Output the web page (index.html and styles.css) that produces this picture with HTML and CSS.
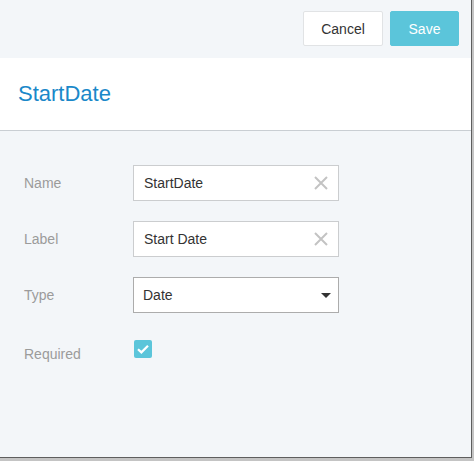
FILE: index.html
```html
<!DOCTYPE html>
<html>
<head>
<meta charset="utf-8">
<link rel="stylesheet" href="styles.css">
</head>
<body>
<div class="panel">
  <div class="toolbar">
    <button class="btn btn-cancel">Cancel</button>
    <button class="btn btn-save">Save</button>
  </div>
  <div class="header">StartDate</div>
  <div class="form">
    <div class="label">Name</div>
    <div class="field">
      <span class="value">StartDate</span>
      <svg class="clear" width="14" height="14" viewBox="0 0 14 14"><path d="M1 1 L13 13 M13 1 L1 13" stroke="#c3c3c3" stroke-width="2" fill="none"/></svg>
    </div>
    <div class="label">Label</div>
    <div class="field">
      <span class="value">Start Date</span>
      <svg class="clear" width="14" height="14" viewBox="0 0 14 14"><path d="M1 1 L13 13 M13 1 L1 13" stroke="#c3c3c3" stroke-width="2" fill="none"/></svg>
    </div>
    <div class="label">Type</div>
    <div class="field select">
      <span class="value">Date</span>
      <svg class="caret" width="10" height="5" viewBox="0 0 10 5"><path d="M0 0 L10 0 L5 5 Z" fill="#333"/></svg>
    </div>
    <div class="label label-req">Required</div>
    <div class="check-cell">
      <span class="checkbox"><svg width="18" height="18" viewBox="0 0 18 18"><path d="M4 9.2 L7.4 12.4 L14 5.8" stroke="#fff" stroke-width="2.2" fill="none"/></svg></span>
    </div>
  </div>
</div>
</body>
</html>
```
FILE: styles.css
```css
html, body {
  margin: 0;
  padding: 0;
}
body {
  background: #c4c4c4;
  font-family: "Liberation Sans", Arial, sans-serif;
  width: 474px;
  height: 461px;
  overflow: hidden;
}
.panel {
  width: 471px;
  height: 457px;
  background: #f3f6f9;
  border-right: 1px solid #5e5e5e;
  border-bottom: 1px solid #5e5e5e;
}
.toolbar {
  height: 58px;
  box-sizing: border-box;
  padding: 11px 12px 0 0;
  display: flex;
  justify-content: flex-end;
  gap: 7px;
}
.btn {
  font-family: "Liberation Sans", Arial, sans-serif;
  font-size: 14px;
  height: 35px;
  border-radius: 2px;
  padding: 0;
  cursor: pointer;
}
.btn-cancel {
  width: 80px;
  background: #fff;
  border: 1px solid #e1e3e5;
  color: #333;
}
.btn-save {
  width: 69px;
  background: #5bc5da;
  border: 1px solid #5bc5da;
  color: #fff;
}
.header {
  height: 72px;
  line-height: 72px;
  background: #fff;
  border-bottom: 1px solid #c9ced3;
  padding-left: 18px;
  font-size: 22px;
  color: #1a88c9;
}
.form {
  display: grid;
  grid-template-columns: 109px 206px;
  grid-auto-rows: 36px;
  row-gap: 20px;
  padding: 34px 0 0 24px;
}
.label {
  font-size: 14px;
  line-height: 36px;
  color: #9b9b9b;
}
.label-req {
  line-height: 42px;
}
.field {
  box-sizing: border-box;
  height: 36px;
  background: #fff;
  border: 1px solid #cbcdcf;
  display: flex;
  align-items: center;
  justify-content: space-between;
  padding: 0 10px 0 10px;
}
.field.select {
  border-color: #acacac;
  padding: 0 7px 0 9px;
}
.value {
  font-size: 14px;
  color: #333;
}
.check-cell {
  padding: 7px 0 0 1px;
}
.checkbox {
  display: block;
  width: 18px;
  height: 18px;
  background: #5bc5da;
  border-radius: 2px;
}
.checkbox svg {
  display: block;
}
```
